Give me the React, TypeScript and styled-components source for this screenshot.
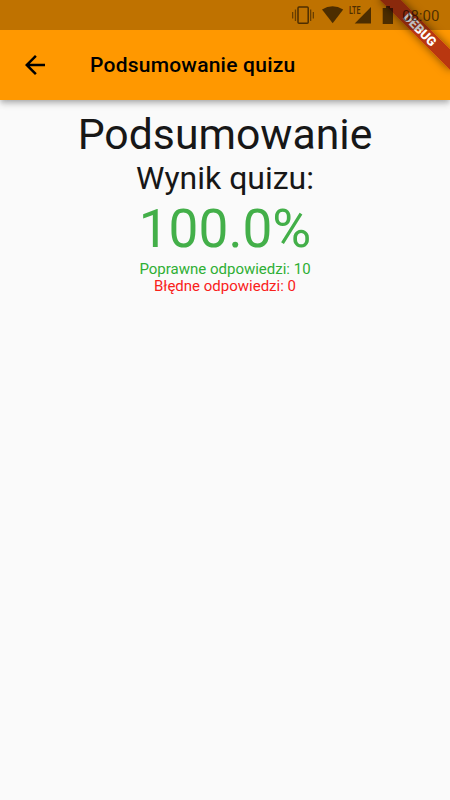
import React from 'react';
import styled, { createGlobalStyle } from 'styled-components';

const GlobalStyle = createGlobalStyle`
  * { box-sizing: border-box; }
  body { margin: 0; background: #fafafa; font-family: Roboto, sans-serif; }
`;

const Screen = styled.div`
  position: relative;
  width: 450px;
  height: 800px;
  overflow: hidden;
  display: flex;
  flex-direction: column;
  background: #fafafa;
`;

const StatusBar = styled.div`
  position: absolute;
  inset: 0 0 auto;
  z-index: 2;
  height: 30px;
  background: rgba(0, 0, 0, 0.25);
  color: rgba(0, 0, 0, 0.6);
  display: flex;
  justify-content: flex-end;
  padding-right: 10px;
`;

const StatusIcons = styled.svg`
  display: block;
  width: 110px;
  height: 30px;
`;

const Clock = styled.span`
  width: 38px;
  white-space: nowrap;
  font-size: 15px;
  line-height: 32px;
  font-weight: 400;
`;

const AppBar = styled.header`
  height: 100px;
  flex: none;
  display: flex;
  align-items: center;
  background: #ff9800;
  padding: 30px 0 0 20px;
  gap: 40px;
  box-shadow: 0 2.5px 5px -1px rgba(0, 0, 0, 0.2), 0 5px 6px rgba(0, 0, 0, 0.1),
    0 1px 10px rgba(0, 0, 0, 0.1);
`;

const BackButton = styled.button`
  border: 0;
  padding: 0;
  width: 30px;
  height: 30px;
  background: none;
  svg { display: block; }
`;

const Title = styled.h1`
  margin: 0;
  font-size: 21px;
  line-height: 30px;
  font-weight: 500;
  letter-spacing: 0.23px;
  color: #000;
  white-space: nowrap;
`;

const Summary = styled.main`
  display: flex;
  flex-direction: column;
  align-items: center;
  padding-top: 9px;
`;

const Line = styled.div<{ $size: number; $height: number; $color?: string }>`
  font-size: ${(p) => p.$size}px;
  line-height: ${(p) => p.$height}px;
  color: ${(p) => p.$color ?? '#171717'};
  white-space: nowrap;
`;

const DebugBanner = styled.div`
  position: absolute;
  z-index: 1;
  top: 22px;
  left: 370px;
  width: 100px;
  height: 15px;
  transform: rotate(45deg);
  background: rgba(158, 18, 22, 0.72);
  box-shadow: 0 0 8px rgba(0, 0, 0, 0.5);
  color: #fff;
  text-align: center;
  font-size: 12.75px;
  line-height: 15px;
  font-weight: 900;
`;

export default function App() {
  return (
    <>
      <GlobalStyle />
      <Screen>
        <StatusBar>
          <StatusIcons viewBox="292 0 110 30" fill="currentColor">
            <path opacity="0.75" d="M292 12h1.300v6.500H292zM294.800 9.500h1.300v11.500h-1.300zM310 9.500h1.300v11.500H310zM312.700 12h1.300v6.500h-1.300z" />
            <rect x="298" y="6.900" width="10.200" height="16.300" rx="1" fill="none" stroke="currentColor" strokeWidth="1.500" />
            <path d="M322 9.500Q332.500 2.900 343.200 9.500L332.700 23.300Z" />
            <path d="M371 7V23.500H354.700Z" />
            <text x="349" y="14" fontFamily="Roboto" fontSize="10" fontWeight="700" textLength="11.500" lengthAdjust="spacingAndGlyphs">LTE</text>
            <path d="M382.700 8h3.300V6h4v2h3v16h-10.300z" />
          </StatusIcons>
          <Clock>08:00</Clock>
        </StatusBar>
        <AppBar>
          <BackButton aria-label="Wstecz">
            <svg width="30" height="30" viewBox="0 0 24 24">
              <path d="M20 11H7.830l5.590-5.590L12 4l-8 8 8 8 1.410-1.410L7.830 13H20z" />
            </svg>
          </BackButton>
          <Title>Podsumowanie quizu</Title>
        </AppBar>
        <Summary>
          <Line $size={42.75} $height={51}>Podsumowanie</Line>
          <Line $size={32} $height={37}>Wynik quizu:</Line>
          <Line $size={53.2} $height={64} $color="#43af49">100.0%</Line>
          <Line $size={15} $height={17} $color="#2eaf34">Poprawne odpowiedzi: 10</Line>
          <Line $size={15} $height={17.5} $color="#f9211a">Błędne odpowiedzi: 0</Line>
        </Summary>
        <DebugBanner>DEBUG</DebugBanner>
      </Screen>
    </>
  );
}
